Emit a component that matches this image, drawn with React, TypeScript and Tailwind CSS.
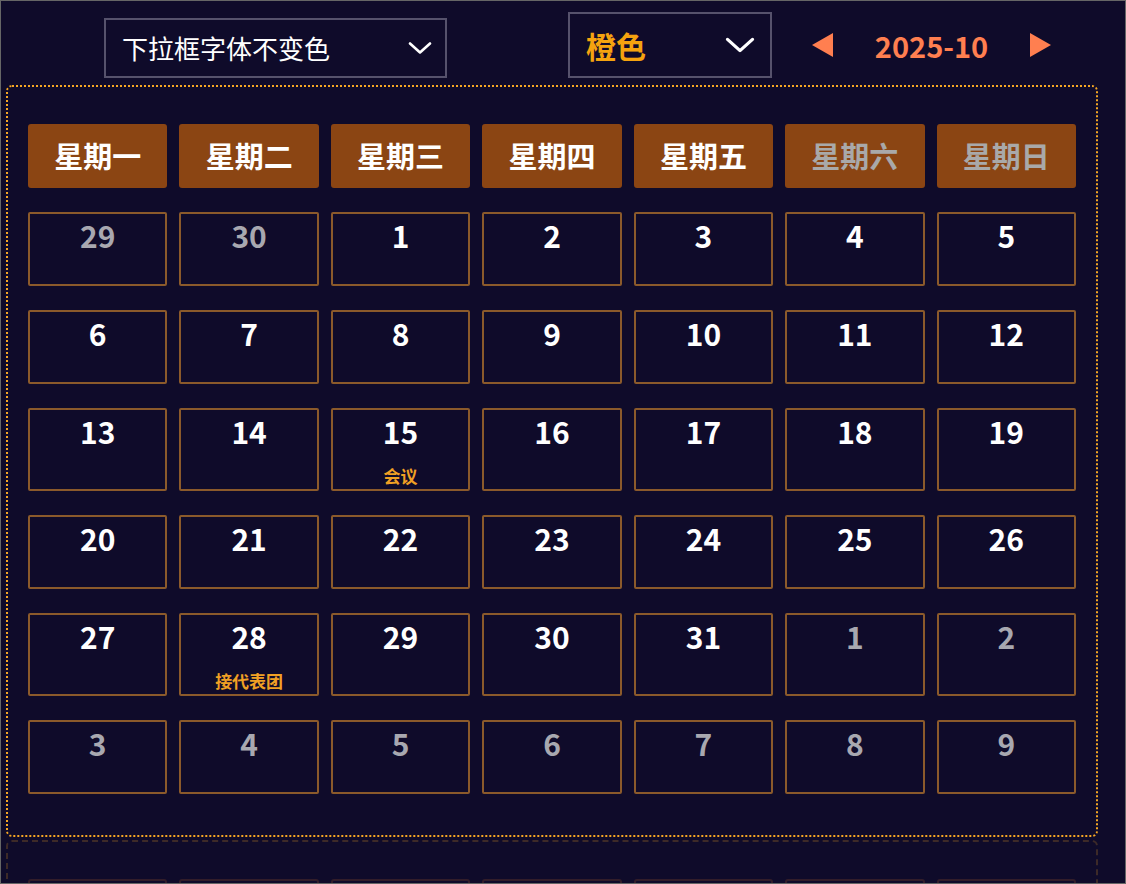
import React from 'react';

const WEEKDAYS = ['星期一', '星期二', '星期三', '星期四', '星期五', '星期六', '星期日'];

const EVENTS: Record<number, string> = {
  15: '会议',
  28: '接代表团',
};

type Day = { day: number; current: boolean };

function buildDays(): Day[] {
  const days: Day[] = [];
  days.push({ day: 29, current: false }, { day: 30, current: false });
  for (let d = 1; d <= 31; d++) days.push({ day: d, current: true });
  for (let d = 1; days.length < 42; d++) days.push({ day: d, current: false });
  return days;
}

function Chevron({ className }: { className: string }) {
  return (
    <svg className={className} viewBox="0 0 24 12" fill="none" stroke="currentColor" strokeWidth={2.6} strokeLinecap="round" strokeLinejoin="round">
      <path d="M2 1.5l10 9 10-9" />
    </svg>
  );
}

function Calendar() {
  const days = buildDays();
  return (
    <div className="ml-[5px] w-[1092px] rounded-[6px] border-2 border-dotted border-[#f5a623] px-[20px] pt-[37px] pb-[41px]">
      <div className="grid grid-cols-7 gap-x-[12px] gap-y-[24px]">
        {WEEKDAYS.map((w, i) => (
          <div
            key={w}
            className={`flex h-[64px] items-center justify-center rounded-[3px] bg-[#8b4513] text-[29px] font-bold ${
              i >= 5 ? 'text-[#a9a9a9]' : 'text-white'
            }`}
          >
            {w}
          </div>
        ))}
        {days.map((d, i) => {
          const ev = d.current ? EVENTS[d.day] : undefined;
          return (
            <div
              key={i}
              className="flex min-h-[74px] flex-col items-center rounded-[2px] border-2 border-[#8b5a2b] pt-[1px]"
            >
              <span className={`text-[30px] font-bold leading-[40px] ${d.current ? 'text-white' : 'text-[#a8a8b0]'}`}>
                {d.day}
              </span>
              {ev && (
                <span className="mt-[15px] pb-[3px] text-[17px] font-bold leading-[20px] text-[#f0a024]">{ev}</span>
              )}
            </div>
          );
        })}
      </div>
    </div>
  );
}

// next month's panel, only its top edge peeks in at the bottom
function FaintCalendar() {
  return (
    <div className="ml-[5px] mt-[3px] w-[1092px] rounded-[6px] border-2 border-dashed border-[#f5a623] px-[20px] pt-[37px] pb-[38px] opacity-20">
      <div className="grid grid-cols-7 gap-x-[12px]">
        {WEEKDAYS.map((w) => (
          <div key={w} className="h-[64px] rounded-[3px] border-2 border-[#c0652a]" />
        ))}
      </div>
    </div>
  );
}

export default function App() {
  return (
    <div
      className="h-[884px] w-[1126px] overflow-hidden border border-[#666666] bg-[#0f0b2a]"
      style={{ fontFamily: '"Noto Sans CJK SC", "Noto Sans", sans-serif' }}
    >
      <div className="flex items-end pl-[103px] pt-[11px]">
        <div className="flex h-[60px] w-[343px] items-center justify-between border-2 border-[#56526c] pl-[16px] pr-[13px]">
          <span className="text-[26px] leading-none text-white">下拉框字体不变色</span>
          <Chevron className="h-[12px] w-[24px] text-white" />
        </div>
        <div className="ml-[121px] flex h-[66px] w-[204px] items-center justify-between border-2 border-[#56526c] pl-[16px] pr-[15px]">
          <span className="text-[30px] font-bold leading-none text-[#f5a30f]">橙色</span>
          <Chevron className="h-[16px] w-[30px] text-white" />
        </div>
        <div className="ml-[40px] flex h-[66px] items-center text-[#ff7f50]">
          <svg className="h-[24px] w-[21px]" viewBox="0 0 21 24" fill="currentColor">
            <path d="M21 0v24L0 12z" />
          </svg>
          <span className="flex w-[197px] justify-center whitespace-nowrap text-[29px] font-semibold leading-none">2025-10</span>
          <svg className="h-[24px] w-[21px]" viewBox="0 0 21 24" fill="currentColor">
            <path d="M0 0v24l21-12z" />
          </svg>
        </div>
      </div>
      <div className="mt-[7px]">
        <Calendar />
        <FaintCalendar />
      </div>
    </div>
  );
}
